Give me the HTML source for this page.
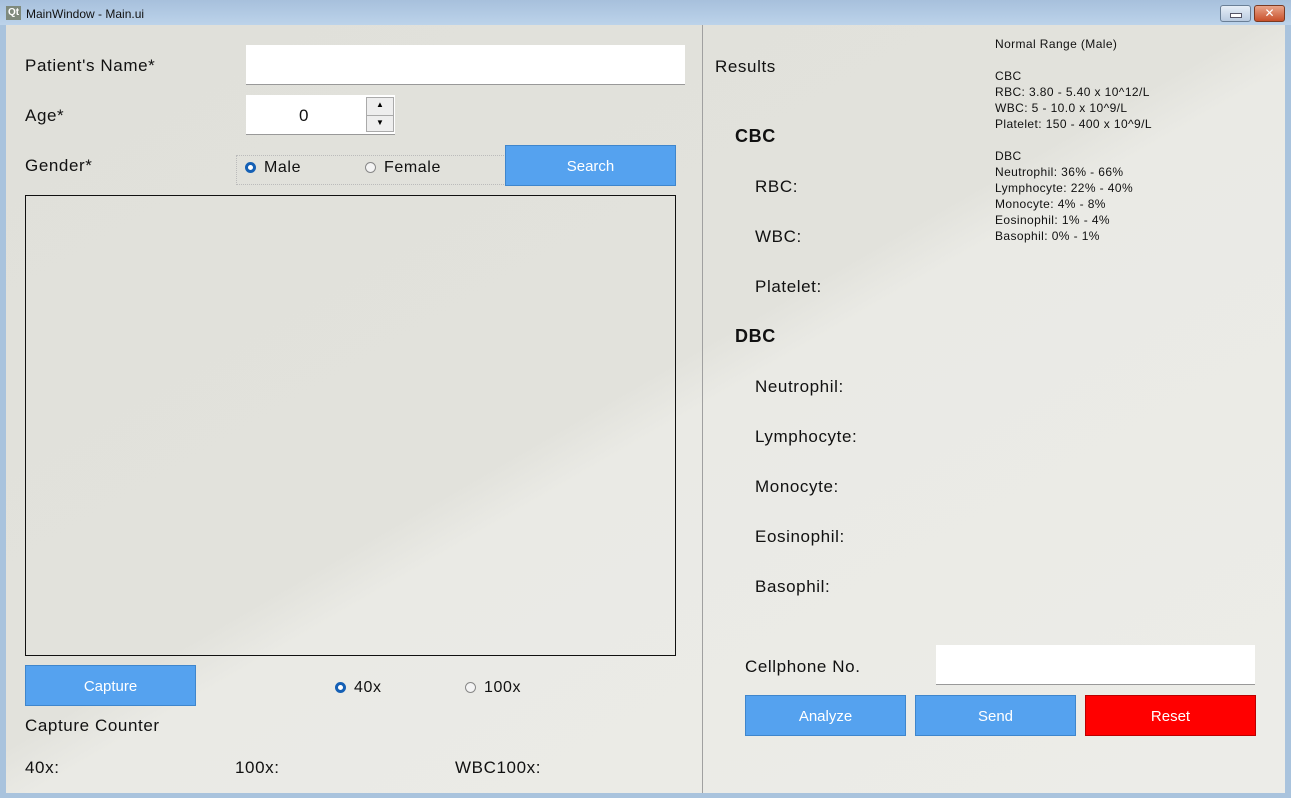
<!DOCTYPE html>
<html><head><style>
body{margin:0;width:1291px;height:798px;overflow:hidden;background:#a9c3dd;font-family:"Liberation Sans","DejaVu Sans",sans-serif;position:relative}
.a{position:absolute;white-space:nowrap}
.l{font-size:17px;color:#111;letter-spacing:0.6px}
.btn{position:absolute;background:#55a2ef;color:#fff;font-size:15px;text-align:center;border:1px solid #3f86cc;box-sizing:border-box;line-height:42px!important}
.inp{position:absolute;background:#fff;border-bottom:1px solid #999;box-sizing:border-box}
.rad{position:absolute;width:11px;height:11px;border-radius:50%;border:1px solid #888;background:#f4f4f4;box-sizing:border-box}
.rad.on{border:3px solid #1560b5;background:#fff}
.s{font-size:12px;color:#111;line-height:16px;letter-spacing:0.4px}
</style></head><body>
<div class="a" style="left:0;top:0;width:1291px;height:25px;background:linear-gradient(#a7c0dc,#bcd3ea)"></div>
<div class="a" style="left:6px;top:6px;width:15px;height:14px;background:#7f8a7c;color:#fff;font-size:10px;font-weight:bold;text-align:center;line-height:14px">Qt</div>
<div class="a" style="left:26px;top:7px;font-size:12px;color:#111">MainWindow - Main.ui</div>
<div class="a" style="left:1220px;top:5px;width:31px;height:17px;border:1px solid #6a7f96;border-radius:3px;background:linear-gradient(#e6eef7,#b9cbe0);box-sizing:border-box"></div>
<div class="a" style="left:1230px;top:13px;width:10px;height:3px;background:#fff;border:1px solid #556"></div>
<div class="a" style="left:1254px;top:5px;width:31px;height:17px;border:1px solid #7a3a22;border-radius:3px;background:linear-gradient(#e9a58a,#c8502b);box-sizing:border-box;color:#fff;font-size:12px;font-weight:bold;text-align:center;line-height:15px">✕</div>
<div class="a" style="left:6px;top:25px;width:1279px;height:768px;background:linear-gradient(150deg,#e0e0da 0%,#e2e2dc 48%,#eaeae5 52%,#ececE8 100%)"></div>
<div class="a" style="left:702px;top:25px;width:1px;height:768px;background:#a0a0a0"></div>
<div class="a l" style="left:25px;top:56px">Patient's Name*</div>
<div class="inp" style="left:246px;top:45px;width:439px;height:40px"></div>
<div class="a l" style="left:25px;top:106px">Age*</div>
<div class="inp" style="left:246px;top:95px;width:149px;height:40px"></div>
<div class="a l" style="left:299px;top:106px">0</div>
<div class="a" style="left:366px;top:97px;width:28px;height:35px;border:1px solid #aaa;background:#eee;box-sizing:border-box"></div>
<div class="a" style="left:367px;top:115px;width:26px;height:1px;background:#aaa"></div>
<div class="a" style="left:376px;top:100px;font-size:8px">▲</div>
<div class="a" style="left:376px;top:118px;font-size:8px">▼</div>
<div class="a l" style="left:25px;top:156px">Gender*</div>
<div class="a" style="left:236px;top:155px;width:270px;height:30px;border:1px dotted #bbb;box-sizing:border-box"></div>
<div class="rad on" style="left:245px;top:162px"></div>
<div class="a l" style="left:264px;top:159px;font-size:16px">Male</div>
<div class="rad" style="left:365px;top:162px"></div>
<div class="a l" style="left:384px;top:159px;font-size:16px">Female</div>
<div class="btn" style="left:505px;top:145px;width:171px;height:41px">Search</div>
<div class="a" style="left:25px;top:195px;width:651px;height:461px;border:1px solid #111;box-sizing:border-box"></div>
<div class="btn" style="left:25px;top:665px;width:171px;height:41px">Capture</div>
<div class="rad on" style="left:335px;top:682px"></div>
<div class="a l" style="left:354px;top:679px;font-size:16px">40x</div>
<div class="rad" style="left:465px;top:682px"></div>
<div class="a l" style="left:484px;top:679px;font-size:16px">100x</div>
<div class="a l" style="left:25px;top:716px">Capture Counter</div>
<div class="a l" style="left:25px;top:758px">40x:</div>
<div class="a l" style="left:235px;top:758px">100x:</div>
<div class="a l" style="left:455px;top:758px">WBC100x:</div>
<div class="a l" style="left:715px;top:57px">Results</div>
<div class="a s" style="left:995px;top:36px">Normal Range (Male)<br><br>CBC<br>RBC: 3.80 - 5.40 x 10^12/L<br>WBC: 5 - 10.0 x 10^9/L<br>Platelet: 150 - 400 x 10^9/L<br><br>DBC<br>Neutrophil: 36% - 66%<br>Lymphocyte: 22% - 40%<br>Monocyte: 4% - 8%<br>Eosinophil: 1% - 4%<br>Basophil: 0% - 1%</div>
<div class="a l" style="left:735px;top:126px;font-weight:bold;font-size:18px">CBC</div>
<div class="a l" style="left:755px;top:177px">RBC:</div>
<div class="a l" style="left:755px;top:227px">WBC:</div>
<div class="a l" style="left:755px;top:277px">Platelet:</div>
<div class="a l" style="left:735px;top:326px;font-weight:bold;font-size:18px">DBC</div>
<div class="a l" style="left:755px;top:377px">Neutrophil:</div>
<div class="a l" style="left:755px;top:427px">Lymphocyte:</div>
<div class="a l" style="left:755px;top:477px">Monocyte:</div>
<div class="a l" style="left:755px;top:527px">Eosinophil:</div>
<div class="a l" style="left:755px;top:577px">Basophil:</div>
<div class="a l" style="left:745px;top:657px">Cellphone No.</div>
<div class="inp" style="left:936px;top:645px;width:319px;height:40px"></div>
<div class="btn" style="left:745px;top:695px;width:161px;height:41px">Analyze</div>
<div class="btn" style="left:915px;top:695px;width:161px;height:41px">Send</div>
<div class="btn" style="left:1085px;top:695px;width:171px;height:41px;background:#ff0000;border-color:#b00">Reset</div>
</body></html>
